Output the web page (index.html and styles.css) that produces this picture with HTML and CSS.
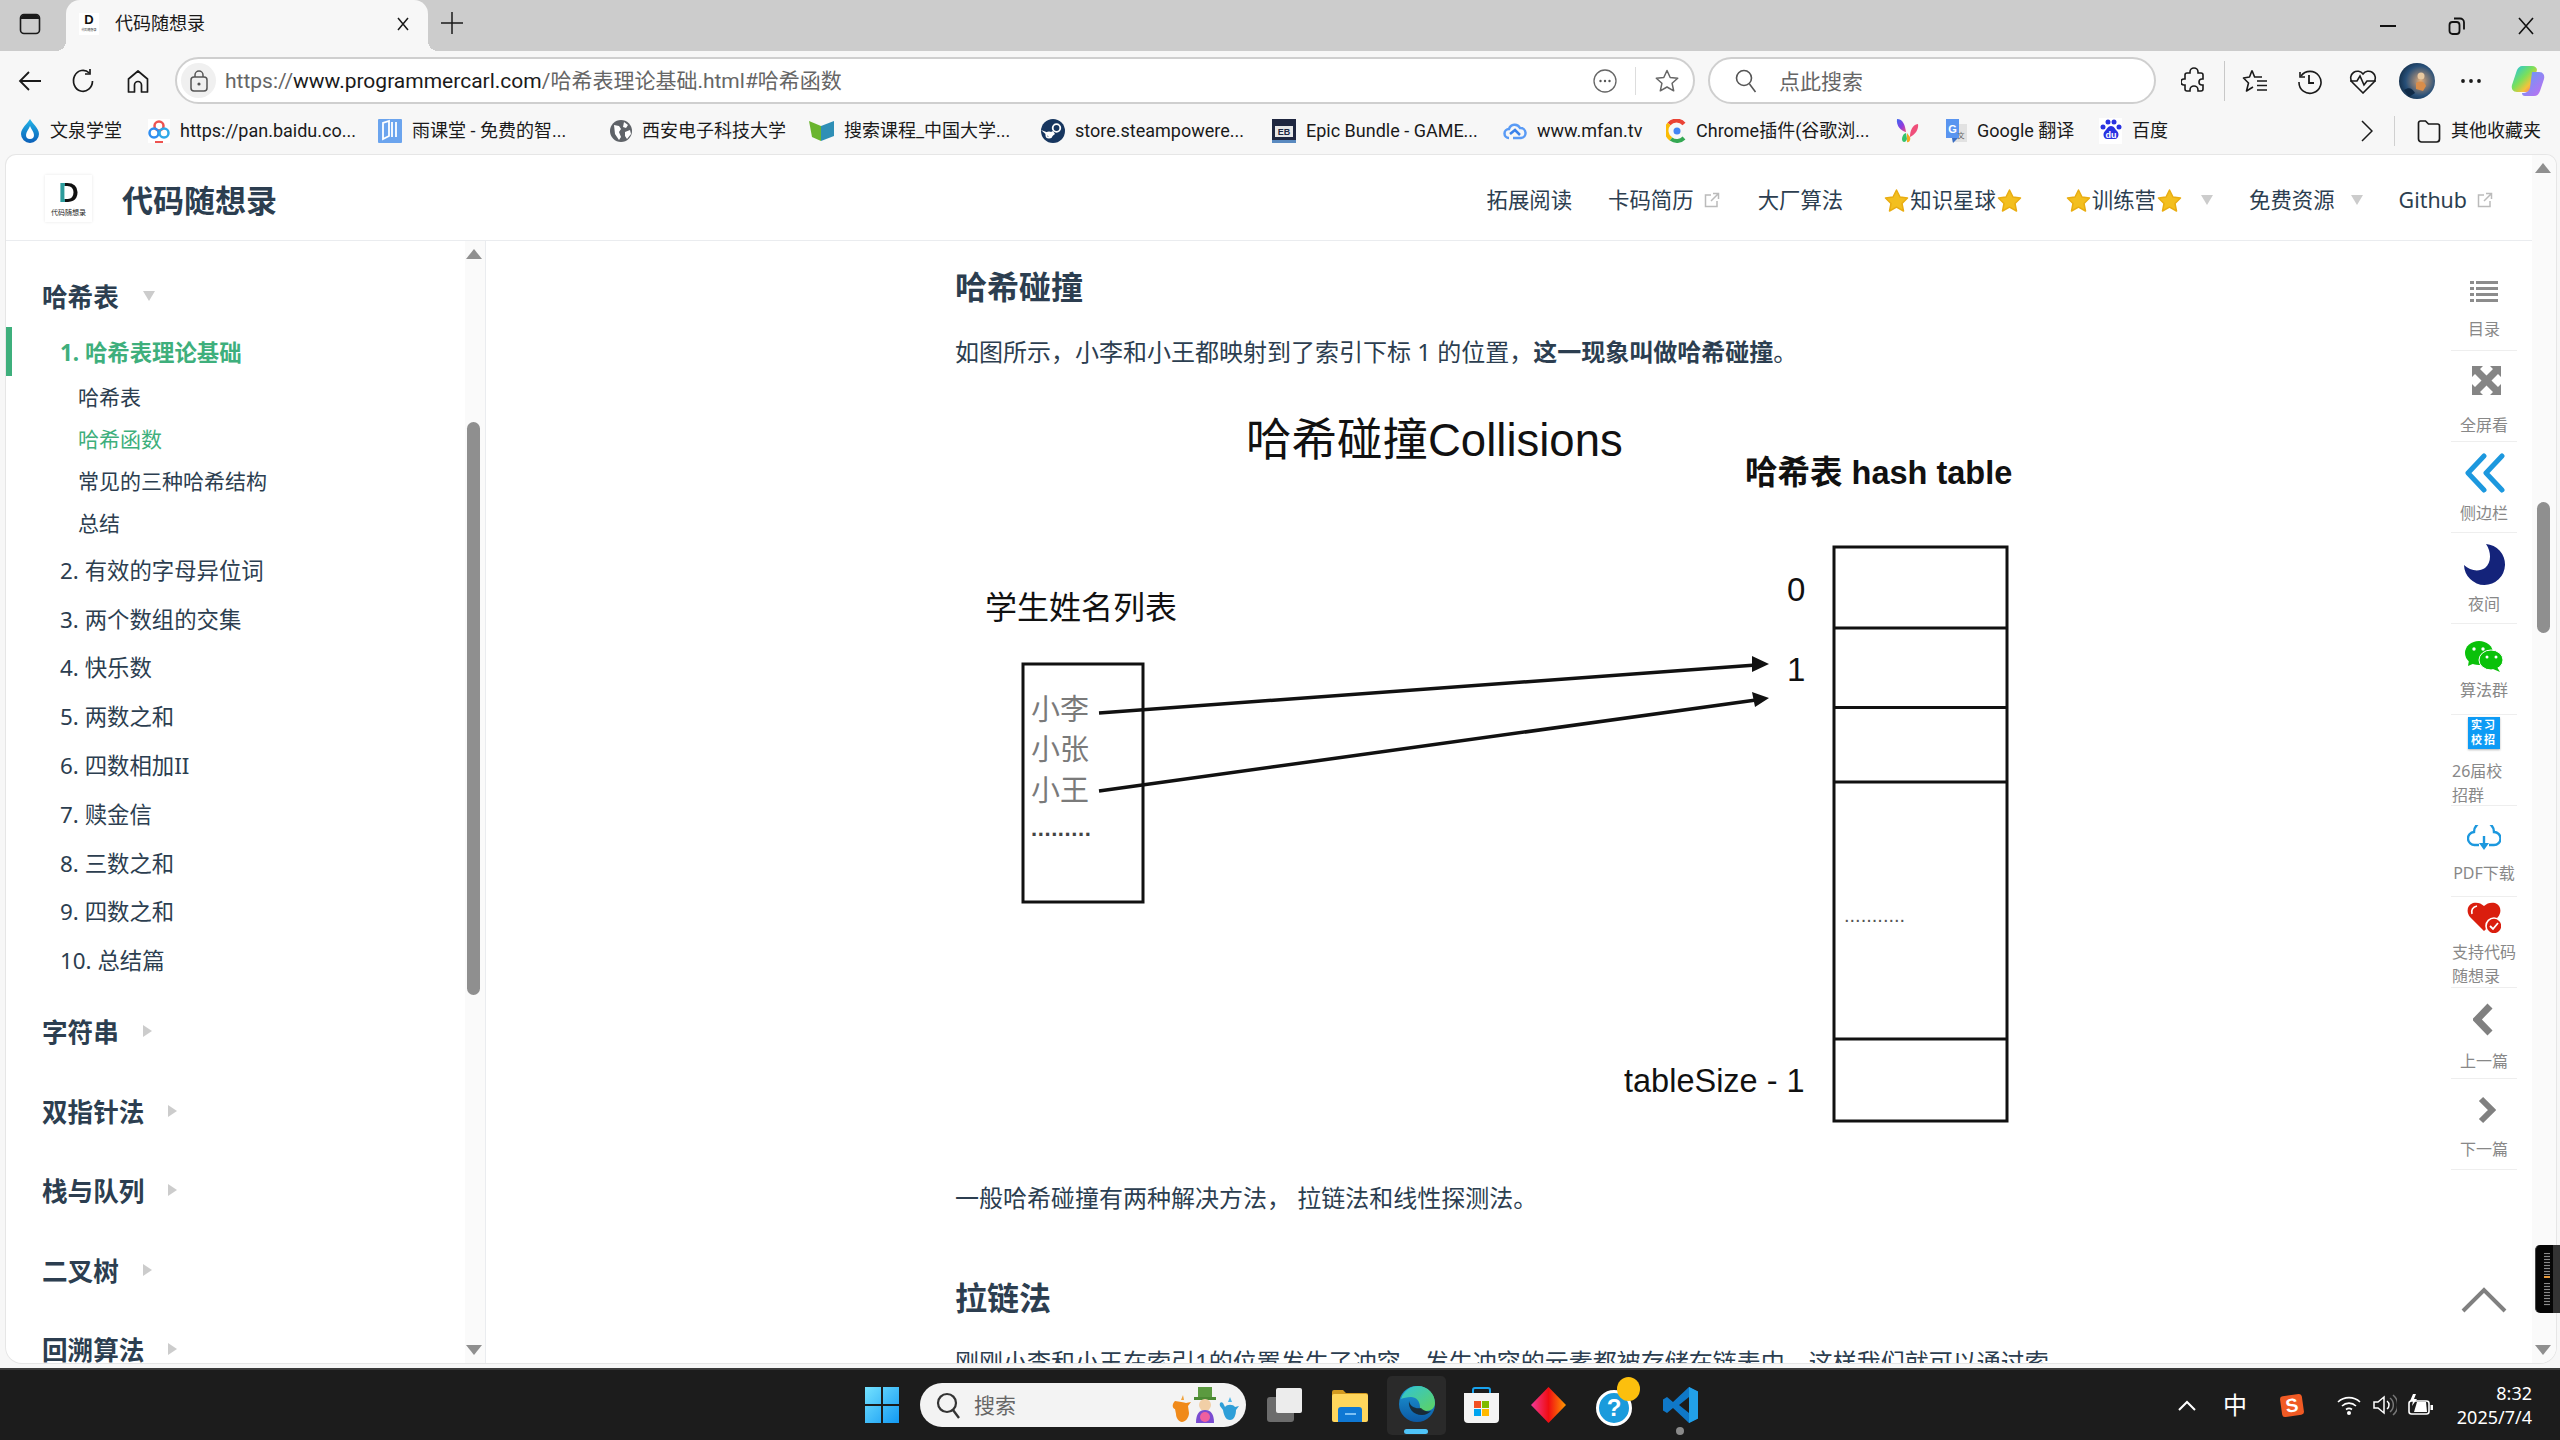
FILE: index.html
```html
<!DOCTYPE html>
<html lang="zh-CN">
<head>
<meta charset="utf-8">
<title>代码随想录</title>
<link rel="stylesheet" href="styles.css">
</head>
<body>
<svg class="defs" width="0" height="0" aria-hidden="true">
  <defs>
    <linearGradient id="gWin" x1="0" y1="0" x2="1" y2="1"><stop offset="0" stop-color="#74e2ff"/><stop offset="1" stop-color="#1299f3"/></linearGradient>
    <linearGradient id="gEdge" x1="0" y1="0" x2="0" y2="1"><stop offset="0" stop-color="#1d9ad6"/><stop offset="1" stop-color="#0c59a4"/></linearGradient>
    <linearGradient id="gEdge2" x1="0" y1="0" x2="1" y2="1"><stop offset="0" stop-color="#30c3d8"/><stop offset="1" stop-color="#5fd35f"/></linearGradient>
    <linearGradient id="gDia" x1="0" y1="0" x2="1" y2="0"><stop offset="0" stop-color="#f03a9a"/><stop offset=".5" stop-color="#f00d12"/><stop offset="1" stop-color="#ff9a00"/></linearGradient>
    <linearGradient id="gCop" x1="0" y1="0" x2="1" y2="1"><stop offset="0" stop-color="#19c2f0"/><stop offset=".45" stop-color="#7be05a"/><stop offset=".7" stop-color="#f6c33a"/><stop offset="1" stop-color="#ef4f8f"/></linearGradient>
    <linearGradient id="gCop2" x1="0" y1="0" x2="1" y2="1"><stop offset="0" stop-color="#5aa0f8"/><stop offset="1" stop-color="#c66cf0"/></linearGradient>
    <linearGradient id="gDrop" x1="0" y1="0" x2="0" y2="1"><stop offset="0" stop-color="#23b5e8"/><stop offset="1" stop-color="#0b5fb8"/></linearGradient>
    <linearGradient id="gFly" x1="0" y1="0" x2="1" y2="1"><stop offset="0" stop-color="#3a6cf0"/><stop offset=".55" stop-color="#8d3be0"/><stop offset="1" stop-color="#ef4f7a"/></linearGradient>
    <radialGradient id="gAva" cx=".6" cy=".5" r=".6"><stop offset="0" stop-color="#e8b078"/><stop offset=".3" stop-color="#8a7f78"/><stop offset=".7" stop-color="#274f78"/><stop offset="1" stop-color="#16324e"/></radialGradient>
  </defs>
</svg>

<header class="tabbar">
  <svg class="tb-panel" width="22" height="22" viewBox="0 0 22 22"><rect x="1.5" y="1.5" width="19" height="19" rx="3.5" fill="none" stroke="#1a1a1a" stroke-width="1.6"/><path d="M2 6V4.5A2.5 2.5 0 0 1 4.5 2h13A2.5 2.5 0 0 1 20 4.5V6z" fill="#1a1a1a"/></svg>
  <div class="tab">
    <span class="tab-fav"><span class="d-mini">D</span><span class="logo-mini">代码随想录</span></span>
    <span class="tab-title">代码随想录</span>
    <svg class="tab-close" width="14" height="14" viewBox="0 0 14 14"><path d="M2 1l10 12M12 1L2 13" stroke="#1a1a1a" stroke-width="1.5" fill="none"/></svg>
  </div>
  <svg class="tab-plus" width="22" height="24" viewBox="0 0 22 24"><path d="M11 1v22M0 12h22" stroke="#1a1a1a" stroke-width="1.5"/></svg>
  <div class="winctl">
    <span class="winbtn"><svg width="18" height="4" viewBox="0 0 18 4"><path d="M1 2h16" stroke="#111" stroke-width="2"/></svg></span>
    <span class="winbtn"><svg width="18" height="20" viewBox="0 0 18 20"><rect x="1.5" y="6" width="10" height="12" rx="3" fill="none" stroke="#111" stroke-width="1.8"/><path d="M6 2.5h6a4 4 0 0 1 4 4v7" fill="none" stroke="#111" stroke-width="1.8"/></svg></span>
    <span class="winbtn"><svg width="18" height="18" viewBox="0 0 18 18"><path d="M2 1l14 16M16 1L2 17" stroke="#111" stroke-width="1.6"/></svg></span>
  </div>
</header>

<div class="toolbar">
  <span class="tool"><svg width="26" height="26" viewBox="0 0 26 26"><path d="M24 13H3M12 4l-9 9 9 9" fill="none" stroke="#1a1a1a" stroke-width="1.8"/></svg></span>
  <span class="tool"><svg width="26" height="26" viewBox="0 0 26 26"><path d="M21.5 13a9.5 10.5 0 1 1-3.2-8" fill="none" stroke="#1a1a1a" stroke-width="1.7"/><path d="M19 1v5h-5" fill="none" stroke="#1a1a1a" stroke-width="1.7"/></svg></span>
  <span class="tool"><svg width="26" height="26" viewBox="0 0 26 26"><path d="M3.5 24V11L13 3l9.500 8v13h-6v-7a3.500 3.500 0 0 0-7 0v7z" fill="none" stroke="#1a1a1a" stroke-width="1.7" stroke-linejoin="round"/></svg></span>
  <div class="address">
    <span class="lock"><svg width="20" height="24" viewBox="0 0 20 24"><rect x="2" y="8" width="16" height="14" rx="3" fill="none" stroke="#555" stroke-width="1.500"/><path d="M6 8V6a4 4 0 0 1 8 0v2" fill="none" stroke="#555" stroke-width="1.500"/><circle cx="10" cy="15" r="1.600" fill="#555"/></svg></span>
    <span class="url"><span class="dim">https://</span>www.programmercarl.com<span class="dim">/哈希表理论基础.html#哈希函数</span></span>
    <span class="addr-end">
      <svg width="24" height="24" viewBox="0 0 24 24"><circle cx="12" cy="12" r="11" fill="none" stroke="#666" stroke-width="1.300"/><circle cx="7.500" cy="12" r="1.200" fill="#555"/><circle cx="12" cy="12" r="1.200" fill="#555"/><circle cx="16.500" cy="12" r="1.200" fill="#555"/></svg>
      <i class="addr-sep"></i>
      <svg width="26" height="26" viewBox="0 0 26 26"><path d="M13 2.500l3.200 7 7.500.8-5.600 5 1.600 7.500-6.700-3.800-6.700 3.800 1.600-7.500-5.600-5 7.500-.8z" fill="none" stroke="#666" stroke-width="1.500" stroke-linejoin="round"/></svg>
    </span>
  </div>
  <div class="search">
    <svg width="24" height="26" viewBox="0 0 24 26"><circle cx="10" cy="10" r="7.500" fill="none" stroke="#555" stroke-width="1.600"/><path d="M15.500 16l6 8" stroke="#555" stroke-width="1.600"/></svg>
    <span class="search-text">点此搜索</span>
  </div>
  <span class="tool"><svg width="26" height="28" viewBox="0 0 26 28"><path d="M9 5a4 4 0 0 1 8 0v1h3a2 2 0 0 1 2 2v4h-1a3 3 0 0 0 0 6h1v4a2 2 0 0 1-2 2h-3v-1a4 4 0 0 0-8 0v1H6a2 2 0 0 1-2-2v-4H3a3 3 0 0 1 0-6h1V8a2 2 0 0 1 2-2h3z" fill="none" stroke="#1a1a1a" stroke-width="1.600"/></svg></span>
  <i class="tool-sep"></i>
  <span class="tool"><svg width="26" height="26" viewBox="0 0 26 26"><path d="M10 2.500l2.600 6.500H20M10 2.500L7.500 9 1.500 10l5 5-2 8 6.500-4" fill="none" stroke="#1a1a1a" stroke-width="1.600" stroke-linejoin="round"/><path d="M15 13h10M15 17.500h10M15 22h10" stroke="#1a1a1a" stroke-width="1.600"/></svg></span>
  <span class="tool"><svg width="26" height="28" viewBox="0 0 26 28"><path d="M4 5v5h5" fill="none" stroke="#1a1a1a" stroke-width="1.600"/><path d="M5 9a11 11 0 1 1-2 6" fill="none" stroke="#1a1a1a" stroke-width="1.600"/><path d="M13 8v8h5" fill="none" stroke="#1a1a1a" stroke-width="1.800"/></svg></span>
  <span class="tool"><svg width="28" height="26" viewBox="0 0 28 26"><path d="M14 25L3 14a6.500 6.500 0 0 1 11-8 6.500 6.500 0 0 1 11 8z" fill="none" stroke="#1a1a1a" stroke-width="1.600"/><path d="M1 13h7l3-5 4 9 3-4h9" fill="none" stroke="#1a1a1a" stroke-width="1.600"/></svg></span>
  <span class="tool"><svg width="36" height="36" viewBox="0 0 36 36"><circle cx="18" cy="18" r="18" fill="url(#gAva)"/><circle cx="22" cy="13" r="3.500" fill="#e9c9a0"/><path d="M17 20c5-3 9-1 10 3l-3 5-7-2z" fill="#d98d4a"/><path d="M5 27c5-3 8-2 11 3l-6 4z" fill="#0f2a47"/></svg></span>
  <span class="tool"><svg width="22" height="6" viewBox="0 0 22 6"><circle cx="3" cy="3" r="1.900" fill="#1a1a1a"/><circle cx="11" cy="3" r="1.900" fill="#1a1a1a"/><circle cx="19" cy="3" r="1.900" fill="#1a1a1a"/></svg></span>
  <span class="tool tool-cop"><svg width="34" height="32" viewBox="0 0 34 32"><path d="M11 1h10c3 0 5 2 5 4L21 22c-1 3-3 5-6 5H6c-4 0-6-3-5-7L6 5c1-2 3-4 5-4z" fill="url(#gCop)"/><path d="M21 7h7c4 0 6 3 5 7l-4 12c-1 3-3 5-6 5h-9c-2 0-3-1-3-3 5 0 7-2 8-5z" fill="url(#gCop2)"/></svg></span>
</div>

<nav class="bookmarks">
  <div class="bm"><svg class="bm-ico" width="20" height="24" viewBox="0 0 20 24"><path d="M10 0c2 4 9 9 9 15a9 9 0 0 1-18 0C1 9 8 4 10 0z" fill="url(#gDrop)"/><path d="M10 7c1 3 4 6 4 9a4 4 0 0 1-8 0c0-3 3-6 4-9z" fill="#fff"/></svg><span>文泉学堂</span></div>
  <div class="bm"><svg class="bm-ico" width="22" height="24" viewBox="0 0 22 24"><rect width="22" height="24" fill="#fff"/><circle cx="11" cy="7" r="4.500" fill="none" stroke="#ee5350" stroke-width="2.500"/><circle cx="6" cy="14" r="4.500" fill="none" stroke="#2f8df0" stroke-width="2.500"/><circle cx="16" cy="14" r="4.500" fill="none" stroke="#30a8e8" stroke-width="2.500"/><rect x="7" y="22" width="8" height="2" fill="#ee5350"/></svg><span>https://pan.baidu.co...</span></div>
  <div class="bm"><svg class="bm-ico" width="24" height="24" viewBox="0 0 24 24"><rect width="24" height="24" rx="1" fill="#6ba4ee"/><path d="M5 4v16l6-3V2zM14 3v15M18 3v15" fill="none" stroke="#fff" stroke-width="1.800"/></svg><span>雨课堂 - 免费的智...</span></div>
  <div class="bm"><svg class="bm-ico" width="22" height="22" viewBox="0 0 22 22"><circle cx="11" cy="11" r="11" fill="#5f6368"/><path d="M4 5l5 1 2 3-2 3 2 5-2 3-4-6zM14 2l4 3-2 3-3-1zM15 12l5-2 1 4-4 5-2-3z" fill="#fff"/></svg><span>西安电子科技大学</span></div>
  <div class="bm"><svg class="bm-ico" width="25" height="24" viewBox="0 0 25 24"><path d="M0 2l12 5v15L3 18z" fill="#6ab52f"/><path d="M12 7l13-5v15l-13 5z" fill="#2f8fb6"/></svg><span>搜索课程_中国大学...</span></div>
  <div class="bm"><svg class="bm-ico" width="24" height="24" viewBox="0 0 24 24"><circle cx="12" cy="12" r="12" fill="#17365f"/><circle cx="15.500" cy="9" r="3.800" fill="none" stroke="#fff" stroke-width="1.800"/><circle cx="8" cy="16" r="2.800" fill="none" stroke="#fff" stroke-width="1.500"/><path d="M0 11l8 3 4-2 2 3-5 4z" fill="#fff"/></svg><span>store.steampowere...</span></div>
  <div class="bm"><svg class="bm-ico" width="24" height="24" viewBox="0 0 24 24"><rect width="24" height="24" fill="#1f2740"/><rect y="21" width="24" height="3" fill="#5a8ac0"/><rect x="3" y="7" width="18" height="11" fill="#e8e8e8"/><text x="12" y="16" class="epic-txt">EB</text></svg><span>Epic Bundle - GAME...</span></div>
  <div class="bm"><svg class="bm-ico" width="24" height="18" viewBox="0 0 24 18"><path d="M6 16a4.500 4.500 0 0 1 0-9 6 6 0 0 1 11-1 5 5 0 0 1 1 10H10" fill="none" stroke="#5a9bf5" stroke-width="2.500"/><path d="M7 12l5-4 5 5" fill="none" stroke="#3a82ea" stroke-width="2.500"/></svg><span>www.mfan.tv</span></div>
  <div class="bm"><svg class="bm-ico" width="20" height="24" viewBox="0 0 20 24"><path d="M18 5A10 10 0 0 0 3 5" fill="none" stroke="#ea4335" stroke-width="4"/><path d="M3 5a10 10 0 0 0 2 15" fill="none" stroke="#fbbc05" stroke-width="4"/><path d="M5 20a10 10 0 0 0 13-1" fill="none" stroke="#34a853" stroke-width="4"/><circle cx="11" cy="12" r="3.500" fill="#4285f4"/></svg><span>Chrome插件(谷歌浏...</span></div>
  <div class="bm"><svg class="bm-ico" width="25" height="24" viewBox="0 0 25 24"><path d="M2 0c6 0 8 6 9 13-5-1-10-6-9-13z" fill="url(#gFly)"/><path d="M23 5c1 5-3 11-8 13 0-6 2-12 8-13z" fill="#ef4f7a"/><path d="M9 15l2-1 1 6c-1 4-5 4-5 0 0-2 1-4 2-5z" fill="#35c46b"/><path d="M12 14l3 4c1 3-1 6-3 5z" fill="#f5a623"/></svg></div>
  <div class="bm"><svg class="bm-ico" width="23" height="26" viewBox="0 0 23 26"><rect x="8" y="6" width="15" height="18" fill="#e2e2e2"/><path d="M2 1h13v19H2z" fill="#5a95f0"/><path d="M8 20h6l-5 5z" fill="#3a6fc4"/><text x="8.500" y="15" class="gt-g">G</text><text x="17" y="20" class="gt-x">文</text></svg><span>Google 翻译</span></div>
  <div class="bm"><svg class="bm-ico" width="23" height="26" viewBox="0 0 23 26"><rect width="23" height="26" fill="#fff"/><g fill="#2932e1"><circle cx="4" cy="9" r="2.500"/><circle cx="9" cy="4" r="2.500"/><circle cx="15" cy="4" r="2.500"/><circle cx="20" cy="9" r="2.500"/><path d="M12 8c3 0 4 3 6 5 3 3 1 8-2 8H8c-3 0-5-5-2-8 2-2 3-5 6-5z"/></g><text x="12" y="20" class="bd-du">du</text></svg><span>百度</span></div>
  <div class="bm-more"><svg width="12" height="22" viewBox="0 0 12 22"><path d="M1 1l10 10L1 21" fill="none" stroke="#1a1a1a" stroke-width="1.500"/></svg></div>
  <i class="bm-sep"></i>
  <div class="bm bm-other"><svg class="bm-ico" width="24" height="24" viewBox="0 0 24 24"><path d="M1.500 4a2 2 0 0 1 2-2h5l3 3h9a2 2 0 0 1 2 2v13a3 3 0 0 1-3 3h-15a3 3 0 0 1-3-3z" fill="none" stroke="#1a1a1a" stroke-width="1.700"/></svg><span>其他收藏夹</span></div>
</nav>

<main class="page">
  <div class="site-header">
    <div class="logo"><span class="logo-d">D</span><span class="logo-t">代码随想录</span></div>
    <div class="site-title">代码随想录</div>
    <div class="site-nav">
      <a class="nav-item">拓展阅读</a>
      <a class="nav-item">卡码简历<svg class="ext" width="16" height="16" viewBox="0 0 16 16"><path d="M7 3H1.500v11.500H13V9M9 1.500h5.500V7M14 2L7 9" fill="none" stroke="#bbb" stroke-width="1.500"/></svg></a>
      <a class="nav-item nav-c">大厂算法</a>
      <a class="nav-item nav-d"><svg class="star" width="26" height="24" viewBox="0 0 26 24"><path d="M13 2l3.500 7 7.500 1-5.500 5.500 1.500 7.500-7-3.800L6 23l1.500-7.500L2 10l7.500-1z" fill="#f3bf1f" stroke="#e9ad12" stroke-linejoin="round" stroke-width="1.500"/></svg>知识星球<svg class="star" width="26" height="24" viewBox="0 0 26 24"><path d="M13 2l3.500 7 7.500 1-5.500 5.500 1.500 7.500-7-3.800L6 23l1.500-7.500L2 10l7.500-1z" fill="#f3bf1f" stroke="#e9ad12" stroke-linejoin="round" stroke-width="1.500"/></svg></a>
      <a class="nav-item nav-e"><svg class="star" width="26" height="24" viewBox="0 0 26 24"><path d="M13 2l3.500 7 7.500 1-5.500 5.500 1.500 7.500-7-3.800L6 23l1.500-7.500L2 10l7.500-1z" fill="#f3bf1f" stroke="#e9ad12" stroke-linejoin="round" stroke-width="1.500"/></svg>训练营<svg class="star" width="26" height="24" viewBox="0 0 26 24"><path d="M13 2l3.500 7 7.500 1-5.500 5.500 1.500 7.500-7-3.800L6 23l1.500-7.500L2 10l7.500-1z" fill="#f3bf1f" stroke="#e9ad12" stroke-linejoin="round" stroke-width="1.500"/></svg><i class="caret-d nav-caret"></i></a>
      <a class="nav-item">免费资源<i class="caret-d nav-caret nav-caret-wide"></i></a>
      <a class="nav-item nav-github">Github<svg class="ext" width="16" height="16" viewBox="0 0 16 16"><path d="M7 3H1.500v11.500H13V9M9 1.500h5.500V7M14 2L7 9" fill="none" stroke="#bbb" stroke-width="1.500"/></svg></a>
    </div>
  </div>

  <div class="page-body">
    <aside class="sidebar">
      <div class="side-head side-first">哈希表<i class="caret-d side-caret"></i></div>
      <a class="side-link active">1. 哈希表理论基础</a>
      <a class="side-sub">哈希表</a>
      <a class="side-sub current">哈希函数</a>
      <a class="side-sub">常见的三种哈希结构</a>
      <a class="side-sub">总结</a>
      <a class="side-link">2. 有效的字母异位词</a>
      <a class="side-link">3. 两个数组的交集</a>
      <a class="side-link">4. 快乐数</a>
      <a class="side-link">5. 两数之和</a>
      <a class="side-link">6. 四数相加II</a>
      <a class="side-link">7. 赎金信</a>
      <a class="side-link">8. 三数之和</a>
      <a class="side-link">9. 四数之和</a>
      <a class="side-link">10. 总结篇</a>
      <div class="side-head side-gap1">字符串<i class="caret-r side-caret"></i></div>
      <div class="side-head">双指针法<i class="caret-r side-caret"></i></div>
      <div class="side-head">栈与队列<i class="caret-r side-caret"></i></div>
      <div class="side-head">二叉树<i class="caret-r side-caret"></i></div>
      <div class="side-head">回溯算法<i class="caret-r side-caret"></i></div>
      <div class="side-scroll">
        <i class="arrow-up"></i>
        <i class="side-thumb"></i>
        <i class="arrow-down"></i>
      </div>
    </aside>

    <article class="content">
      <h3 class="h-a">哈希碰撞</h3>
      <p class="p-a">如图所示，小李和小王都映射到了索引下标 1 的位置，<strong>这一现象叫做哈希碰撞</strong>。</p>
      <svg class="diagram" width="1090" height="779" viewBox="955 400 1090 779">
        <text x="1246" y="440" class="d-title">哈希碰撞Collisions</text>
        <text x="1745" y="473" class="d-head">哈希表 hash table</text>
        <text x="985" y="608" class="d-sub">学生姓名列表</text>
        <rect x="1023" y="664" width="120" height="238" class="d-box"/>
        <text x="1031" y="709.500" class="d-name">小李</text>
        <text x="1031" y="749.500" class="d-name">小张</text>
        <text x="1031" y="791" class="d-name">小王</text>
        <text x="1031" y="828" class="d-dots">.........</text>
        <rect x="1834" y="547" width="173" height="574" class="d-box"/>
        <path d="M1834 628H2007M1834 707.500H2007M1834 782H2007M1834 1039H2007" class="d-line"/>
        <text x="1787" y="589" class="d-idx">0</text>
        <text x="1787" y="669" class="d-idx">1</text>
        <text x="1624" y="1081" class="d-label">tableSize - 1</text>
        <text x="1844" y="915" class="d-dots2">...........</text>
        <path d="M1099 713L1756 665" class="d-arrow"/>
        <path d="M1099 791L1756 700" class="d-arrow"/>
        <path d="M1769 664L1752 656V672zM1769 698L1752 692L1755 707z" class="d-head-arrow"/>
      </svg>
      <p class="p-b">一般哈希碰撞有两种解决方法， 拉链法和线性探测法。</p>
      <h3 class="h-b">拉链法</h3>
      <p class="p-c">刚刚小李和小王在索引1的位置发生了冲突，发生冲突的元素都被存储在链表中，这样我们就可以通过索</p>
    </article>

    <div class="rail">
      <div class="rail-item r1"><svg class="rail-ico" width="28" height="22" viewBox="0 0 28 22"><path d="M0 1h4v3H0zM6 1h22v3H6zM0 7h4v3H0zM6 7h22v3H6zM0 13h4v3H0zM6 13h22v3H6zM0 19h4v3H0zM6 19h22v3H6z" fill="#8c8c8c"/></svg><span class="rail-label">目录</span></div>
      <div class="rail-item r2"><svg class="rail-ico" width="29" height="29" viewBox="0 0 29 29"><path d="M0 0h11L8 3l6.500 6.500L21 3l-3-3h11v11l-3-3-6.500 6.500L26 21l3-3v11H18l3-3-6.500-6.500L8 26l3 3H0V18l3 3 6.500-6.500L3 8l-3 3z" fill="#858585"/></svg><span class="rail-label">全屏看</span></div>
      <div class="rail-item r3"><svg class="rail-ico" width="40" height="40" viewBox="0 0 40 40"><path d="M19 3L3 20l16 17M37 3L21 20l16 17" fill="none" stroke="#1c98de" stroke-width="5" stroke-linecap="round" stroke-linejoin="round"/></svg><span class="rail-label">侧边栏</span></div>
      <div class="rail-item r4"><svg class="rail-ico" width="41" height="41" viewBox="0 0 41 41"><path d="M22 0A20.500 20.500 0 1 1 0 21c6 6 15 7 21 3 6-5 7-15 1-24z" fill="#14237a"/></svg><span class="rail-label">夜间</span></div>
      <div class="rail-item r5"><svg class="rail-ico" width="38" height="31" viewBox="0 0 38 31"><ellipse cx="14" cy="12" rx="14" ry="12" fill="#0ac10a"/><path d="M4 19l-1 6 7-3z" fill="#0ac10a"/><ellipse cx="26" cy="19" rx="12" ry="10" fill="#0ac10a" stroke="#fff" stroke-width="1"/><path d="M32 26l3 5-7-3z" fill="#0ac10a"/><circle cx="9" cy="8" r="1.700" fill="#fff"/><circle cx="18" cy="8" r="1.700" fill="#fff"/><circle cx="22" cy="16" r="1.500" fill="#fff"/><circle cx="31" cy="16" r="1.500" fill="#fff"/></svg><span class="rail-label">算法群</span></div>
      <div class="rail-item r6"><div class="rail-ico qr"><span>实习</span><span>校招</span></div><span class="rail-label rail-left">26届校招群</span></div>
      <div class="rail-item r7"><svg class="rail-ico" width="34" height="26" viewBox="0 0 34 26"><path d="M12 20H8a6.500 6.500 0 0 1-1-13 10 10 0 0 1 20 0 6.500 6.500 0 0 1 0 13h-5" fill="none" stroke="#1c98de" stroke-width="2.400"/><path d="M17 11v9" stroke="#1c98de" stroke-width="2.400"/><path d="M12 18h10l-5 7z" fill="#1c98de"/></svg><span class="rail-label">PDF下载</span></div>
      <div class="rail-item r8"><svg class="rail-ico" width="34" height="32" viewBox="0 0 34 32"><path d="M17 30L3 16C-1 11 0 4 6 2c4-1 8 0 11 3 3-3 7-4 11-3 6 2 7 9 3 14z" fill="#da1e0e"/><path d="M5 13C4 9 6 6 10 5" fill="none" stroke="#fff" stroke-width="1.600"/><circle cx="27" cy="25" r="8" fill="#da1e0e" stroke="#fff" stroke-width="1.600"/><path d="M23 25l3 3 5-6" fill="none" stroke="#fff" stroke-width="1.800"/></svg><span class="rail-label rail-left">支持代码随想录</span></div>
      <div class="rail-item r9"><svg class="rail-ico" width="21" height="33" viewBox="0 0 21 33"><path d="M17 3L4 16.500 17 30" fill="none" stroke="#808080" stroke-width="7"/></svg><span class="rail-label">上一篇</span></div>
      <div class="rail-item r10"><svg class="rail-ico" width="18" height="28" viewBox="0 0 18 28"><path d="M3 3l11 11L3 25" fill="none" stroke="#808080" stroke-width="6"/></svg><span class="rail-label">下一篇</span></div>
      <svg class="rail-top" width="46" height="26" viewBox="0 0 46 26"><path d="M2 24L23 3l21 21" fill="none" stroke="#808080" stroke-width="4"/></svg>
    </div>

    <div class="page-scroll">
      <i class="arrow-up"></i>
      <i class="page-thumb"></i>
      <i class="arrow-down"></i>
    </div>
  </div>
</main>

<div class="widget"><i class="ticks"></i><i class="tick-on"></i><i class="ticks ticks-b"></i></div>

<footer class="taskbar">
  <svg class="tk tk-start" width="34" height="36" viewBox="0 0 34 36"><path d="M0 0h16v17H0zM18 0h16v17H18zM0 19h16v17H0zM18 19h16v17H18z" fill="url(#gWin)"/></svg>
  <div class="tk tk-search">
    <svg width="26" height="28" viewBox="0 0 26 28"><circle cx="12" cy="12" r="9" fill="none" stroke="#333" stroke-width="2.200"/><path d="M18 19l6 8" stroke="#333" stroke-width="2.400"/></svg>
    <span class="tk-search-text">搜索</span>
    <svg class="tk-art" width="68" height="36" viewBox="0 0 68 36"><path d="M3 14c-4 4-2 8 0 8l1 5c0 4 3 8 6 8s7-4 7-9l-1-7 3-4-5 1c-2-1-7-1-11-2z" fill="#f08a1a"/><path d="M9 13h3l-1-5z" fill="#f0a23a"/><rect x="26" y="0" width="14" height="11" fill="#5b9a3f"/><rect x="22" y="10" width="22" height="3" fill="#4c8a33"/><circle cx="33" cy="18" r="6" fill="#f1cfa6"/><path d="M24 36c0-9 3-13 9-13s9 4 9 13z" fill="#7a4bd0"/><circle cx="33" cy="30" r="5" fill="#ef5f9f"/><path d="M51 16c-2-2-4 0-3 3l3 4c1 6 3 10 7 10s6-5 6-10l3-4-4 1c-2-3-8-3-10 0z" fill="#2f9fd8"/><path d="M56 15h4l-2-5z" fill="#4fb5e8"/></svg>
  </div>
  <svg class="tk tk-view" width="35" height="34" viewBox="0 0 35 34"><rect x="0" y="9" width="27" height="25" rx="3" fill="#6c6c6c"/><rect x="9" y="0" width="26" height="25" rx="2" fill="#ececec"/></svg>
  <svg class="tk tk-exp" width="36" height="33" viewBox="0 0 36 33"><path d="M0 3a2 2 0 0 1 2-2h9l3 3h20a2 2 0 0 1 2 2v3H0z" fill="#d39a1f"/><rect y="5" width="36" height="28" rx="2" fill="#ffd65c"/><path d="M6 33V21a3 3 0 0 1 3-3h18a3 3 0 0 1 3 3v12z" fill="#0f78d4"/><rect x="13" y="24" width="11" height="2" fill="#7cc0f5"/></svg>
  <div class="tk tk-active"><svg width="36" height="36" viewBox="0 0 36 36"><circle cx="18" cy="18" r="18" fill="url(#gEdge)"/><path d="M2 13C5 4 12 0 19 0c10 0 17 8 17 17 0 5-4 8-9 8-4 0-6-2-6-4 0-6-4-10-9-10-4 0-8 1-10 2z" fill="url(#gEdge2)"/><path d="M22 22c-5 1-11-1-12-7-1 7 4 14 13 14 4 0 7-2 9-4-3 1-7 0-10-3z" fill="#1a1a1a" opacity=".8"/></svg><i class="tk-ind"></i></div>
  <svg class="tk tk-store" width="35" height="36" viewBox="0 0 35 36"><path d="M9 7V3a2 2 0 0 1 2-2h13a2 2 0 0 1 2 2v4" fill="none" stroke="#18a3ef" stroke-width="2"/><path d="M0 6h35v26a4 4 0 0 1-4 4H4a4 4 0 0 1-4-4z" fill="#f4f4f4"/><rect x="10" y="14" width="7" height="7" fill="#f25022"/><rect x="18" y="14" width="7" height="7" fill="#7fba00"/><rect x="10" y="22" width="7" height="7" fill="#00a4ef"/><rect x="18" y="22" width="7" height="7" fill="#ffb900"/></svg>
  <svg class="tk tk-dia" width="35" height="36" viewBox="0 0 35 36"><path d="M17.500 0L35 18 17.500 36 0 18z" fill="url(#gDia)"/></svg>
  <div class="tk tk-help"><span class="help-c">?</span><i class="help-b"></i></div>
  <div class="tk tk-vs"><svg width="35" height="36" viewBox="0 0 35 36"><path d="M26 0l9 4.500v27L26 36 10 21l-6 5-4-2.500v-11L4 10l6 5zM26 10l-10 8 10 8z" fill="#0f78c8" fill-rule="evenodd"/><path d="M26 0l9 4.500v27L26 36z" fill="#22a0e8"/></svg><i class="tk-dot"></i></div>
  <div class="tray">
    <span class="tray-i"><svg width="18" height="12" viewBox="0 0 18 12"><path d="M1 11l8-8 8 8" fill="none" stroke="#fff" stroke-width="2"/></svg></span>
    <span class="tray-i tray-zh">中</span>
    <span class="tray-i"><span class="sogou">S</span></span>
    <span class="tray-i"><svg width="24" height="20" viewBox="0 0 24 20"><path d="M1 7a16 16 0 0 1 22 0M5 11a10 10 0 0 1 14 0M9 14.500a5 5 0 0 1 6 0" fill="none" stroke="#fff" stroke-width="1.600"/><circle cx="12" cy="18" r="2" fill="#fff"/></svg></span>
    <span class="tray-i"><svg width="24" height="22" viewBox="0 0 24 22"><path d="M1 8h4l6-5v16l-6-5H1z" fill="none" stroke="#fff" stroke-width="1.500"/><path d="M14 7a5 5 0 0 1 0 8" fill="none" stroke="#fff" stroke-width="1.500"/><path d="M17 4a9 9 0 0 1 0 14M20 1a13 13 0 0 1 0 20" fill="none" stroke="#777" stroke-width="1.500"/></svg></span>
    <span class="tray-i"><svg width="26" height="22" viewBox="0 0 26 22"><rect x="1" y="7" width="20" height="13" rx="2.500" fill="none" stroke="#fff" stroke-width="1.600"/><rect x="22.500" y="11" width="2.500" height="5" fill="#fff"/><path d="M6 18l3-10h9l1 10z" fill="#fff"/><path d="M5 0L2 7h3l-1 5 5-7H6l2-5z" fill="#fff"/></svg></span>
    <div class="clock"><span>8:32</span><span>2025/7/4</span></div>
  </div>
</footer>
</body>
</html>
```

FILE: styles.css
```css
* { box-sizing: border-box; }
html, body { margin: 0; padding: 0; }
body {
  width: 2560px; height: 1440px; overflow: hidden; background: #f7f7f7;
  font-family: "Noto Sans", "Noto Sans CJK SC", sans-serif; color: #2c3e50;
  display: flex; flex-direction: column; position: relative;
}
i { display: block; font-style: normal; }
.defs { position: absolute; }
svg { display: block; flex: none; }

/* title strip */
.tabbar { height: 51px; background: #cccccc; display: flex; align-items: center; position: relative; flex: none; }
.tb-panel { margin-left: 19px; margin-top: -4px; }
.tab { position: absolute; left: 66px; top: 0; width: 362px; height: 51px; background: #f7f7f7; border-radius: 14px 14px 0 0; display: flex; align-items: center; padding-left: 13px; }
.tab::before, .tab::after { content: ""; position: absolute; bottom: 0; width: 10px; height: 10px; }
.tab::before { left: -10px; background: radial-gradient(circle at 0 0, transparent 10px, #f7f7f7 10px); }
.tab::after { right: -10px; background: radial-gradient(circle at 100% 0, transparent 10px, #f7f7f7 10px); }
.tab-fav { width: 20px; height: 22px; margin-top: -4px; background: #fff; display: flex; flex-direction: column; align-items: center; overflow: hidden; }
.d-mini { font: bold 13px/14px "Liberation Sans", sans-serif; color: #111; }
.logo-mini { font-size: 3px; line-height: 6px; color: #333; white-space: nowrap; }
.tab-title { font-size: 18px; line-height: 26px; color: #1a1a1a; margin-left: 16px; margin-top: -5px; }
.tab-close { margin-left: auto; margin-right: 18px; margin-top: -4px; }
.tab-plus { position: absolute; left: 441px; top: 11px; }
.winctl { margin-left: auto; display: flex; }
.winbtn { width: 69px; display: flex; justify-content: center; align-items: center; height: 51px; }

/* toolbar */
.toolbar { height: 61px; display: flex; align-items: center; padding-left: 3px; flex: none; padding-bottom: 2px; }
.tool { width: 54px; display: flex; justify-content: center; align-items: center; flex: none; }
.tool-cop { width: 60px; }
.tool-sep { width: 1px; height: 40px; background: #c8c8c8; margin: 0 3px; }
.address { width: 1520px; height: 47px; margin-left: 10px; border: 2px solid #cfcfcf; border-radius: 24px; background: #fff; display: flex; align-items: center; padding-left: 4px; }
.lock { width: 35px; height: 35px; border-radius: 50%; background: #f0f0f0; display: flex; justify-content: center; align-items: center; }
.url { font-family: Roboto, "Noto Sans CJK SC", sans-serif; font-size: 21px; line-height: 30px; color: #1a1a1a; margin-left: 9px; white-space: nowrap; }
.dim { color: #666; }
.addr-end { margin-left: auto; display: flex; align-items: center; padding-right: 13px; }
.addr-sep { width: 1px; height: 28px; background: #ddd; margin: 0 18px 0 18px; }
.search { width: 448px; height: 47px; margin-left: 13px; margin-right: 11px; border: 2px solid #cfcfcf; border-radius: 24px; background: #fff; display: flex; align-items: center; padding-left: 24px; }
.search-text { font-size: 21px; line-height: 30px; color: #666; margin-left: 21px; }

/* bookmarks */
.bookmarks { height: 43px; flex: none; display: grid; grid-template-columns: 128px 230px 232px 199px 232px 231px 231px 163px 229px 49px 155px 262px 33px 23px 1fr; padding-left: 20px; padding-bottom: 5px; align-items: center; }
.bm { display: flex; align-items: center; gap: 10px; white-space: nowrap; font-family: Roboto, "Noto Sans CJK SC", sans-serif; font-size: 18px; line-height: 26px; color: #1a1a1a; }
.bm-more { display: flex; justify-content: flex-start; }
.bm-sep { width: 1px; height: 30px; background: #d0d0d0; }
.epic-txt { font: bold 9px "Liberation Sans", sans-serif; text-anchor: middle; fill: #1f2740; }
.gt-g { font: bold 11px "Liberation Sans", sans-serif; text-anchor: middle; fill: #fff; }
.gt-x { font: 7px "Noto Sans CJK SC", sans-serif; text-anchor: middle; fill: #666; }
.bd-du { font: bold 9px "Liberation Sans", sans-serif; text-anchor: middle; fill: #fff; }

/* page */
.page { position: relative; width: 2550px; height: 1208px; margin-left: 6px; flex: none; background: #fff; border-radius: 10px 10px 16px 16px; box-shadow: 0 0 0 1px #e6e6e6; overflow: hidden; display: flex; flex-direction: column; }
.site-header { height: 86px; flex: none; border-bottom: 1px solid #eaecef; display: flex; align-items: center; padding-left: 39px; padding-top: 4px; }
.logo { width: 47px; height: 47px; background: #fff; box-shadow: 0 0 3px rgba(0,0,0,.1); display: flex; flex-direction: column; align-items: center; margin-top: -2px; }
.logo-d { font: bold 28px/30px "Liberation Sans", sans-serif; color: #111; margin-top: 3px; background: linear-gradient(90deg, #2d9c9c 32%, #111 32%); -webkit-background-clip: text; background-clip: text; -webkit-text-fill-color: transparent; }
.logo-t { font-size: 7px; line-height: 10px; color: #222; white-space: nowrap; }
.site-title { font-size: 31px; line-height: 40px; font-weight: 700; color: #2c3e50; margin-left: 30px; }
.site-nav { margin-left: auto; display: flex; align-items: center; gap: 36px; padding-right: 63px; }
.nav-item { display: flex; align-items: center; font-size: 21.4px; line-height: 30px; color: #2c3e50; white-space: nowrap; }
.nav-c { margin-left: 2px; }
.nav-d { margin-left: 4px; }
.nav-e { margin-left: 6px; }
.ext { margin-left: 10px; }
.star { width: 27px; height: 24px; }
.caret-d { width: 0; height: 0; border-left: 6px solid transparent; border-right: 6px solid transparent; border-top: 10px solid #cccccc; }
.caret-r { width: 0; height: 0; border-top: 6px solid transparent; border-bottom: 6px solid transparent; border-left: 9px solid #cccccc; }
.nav-caret { margin-left: 18px; }
.nav-caret-wide { margin-left: 16px; }

.page-body { flex: 1; min-height: 0; display: flex; position: relative; }

/* sidebar */
.sidebar { width: 480px; flex: none; border-right: 1px solid #eaecef; position: relative; overflow: hidden; padding-top: 35px; }
.side-head { display: flex; align-items: center; height: 40px; font-size: 25.6px; font-weight: 700; padding-left: 36px; margin-bottom: 39.5px; white-space: nowrap; color: #2c3e50; }
.side-head.side-first { margin-bottom: 11px; }
.side-gap1 { margin-top: 28.5px; }
.side-caret { margin-left: 24px; }
.side-link { display: block; height: 48.8px; line-height: 48.8px; font-size: 22.4px; padding: 3px 0 0 54px; color: #2c3e50; white-space: nowrap; }
.side-link.active { color: #3eaf7c; font-weight: 700; border-left: 6px solid #3eaf7c; padding-left: 48px; padding-top: 2px; }
.side-sub { display: block; height: 42px; line-height: 42px; font-size: 21px; padding-left: 72px; color: #2c3e50; }
.side-sub.current { color: #3eaf7c; }
.side-scroll { position: absolute; right: 0; top: 0; bottom: 0; width: 20px; background: #fafafa; }
.side-scroll .arrow-up { position: absolute; left: 1px; top: 8px; }
.side-scroll .arrow-down { position: absolute; left: 1px; top: 1104px; }
.side-thumb { position: absolute; left: 2px; top: 181px; width: 13px; height: 573px; border-radius: 7px; background: #8f8f8f; }
.arrow-up { width: 0; height: 0; border-left: 8px solid transparent; border-right: 8px solid transparent; border-bottom: 10px solid #8f8f8f; }
.arrow-down { width: 0; height: 0; border-left: 8px solid transparent; border-right: 8px solid transparent; border-top: 10px solid #8f8f8f; }

/* content */
.content { width: 1100px; margin-left: 469px; flex: none; overflow: hidden; height: 100%; padding-top: 26px; }
h3 { margin: 0; font-size: 32px; line-height: 40px; font-weight: 700; color: #2c3e50; }
p { margin: 0; font-size: 24px; line-height: 38px; color: #2c3e50; }
strong { font-weight: 700; }
.p-a { margin-top: 26px; }
.diagram { margin-top: 29px; }
.h-b { margin-top: 61px; }
.p-c { margin-top: 25px; white-space: nowrap; }
.diagram text { font-family: "Liberation Sans", "Noto Sans CJK SC", sans-serif; dominant-baseline: central; fill: #111; }
.d-title { font-size: 45.5px; }
.d-head { font-size: 32.5px; font-weight: 700; }
.d-sub { font-size: 32px; }
.d-name { font-size: 29px; }
.diagram .d-name { fill: #7a7a7a; }
.d-dots { font-size: 22px; font-weight: 700; letter-spacing: .6px; }
.diagram .d-dots { fill: #444; }
.d-dots2 { font-size: 20px; }
.diagram .d-dots2 { fill: #555; }
.d-idx { font-size: 33px; }
.d-label { font-size: 32.5px; }
.d-box { fill: none; stroke: #111; stroke-width: 3; }
.d-line { fill: none; stroke: #111; stroke-width: 3; }
.d-arrow { fill: none; stroke: #111; stroke-width: 3.500; }
.d-head-arrow { fill: #111; }

/* right rail */
.rail { position: absolute; top: 19px; right: 39px; width: 66px; display: flex; flex-direction: column; }
.rail-item { height: 91px; flex: none; border-bottom: 1px solid #eeeeee; display: flex; flex-direction: column; align-items: center; position: relative; }
.rail-ico { margin-top: var(--t); margin-left: var(--x, 0); }
.rail-label { margin-top: auto; margin-bottom: var(--b); font-size: 16px; line-height: 24px; color: #888; white-space: nowrap; }
.rail-left { align-self: flex-start; white-space: normal; width: 64.5px; text-align: left; margin-left: 1px; }
.r1 { --t: 20px; --b: 9px; }
.r2 { --t: 15px; --b: 4px; --x: 4px; }
.r3 { --t: 11px; --b: 7px; --x: 1px; }
.r4 { --t: 11px; --b: 7px; }
.r5 { --t: 17px; --b: 12px; }
.r6 { --t: 2px; --b: -2px; }
.r7 { --t: 19px; --b: 11px; }
.r8 { --t: 4px; --b: -1px; }
.r9 { --t: 15px; --b: 5px; --x: -1px; }
.r10 { --t: 17px; --b: 8px; --x: 6px; }
.qr { width: 32px; height: 32px; background: #0d9bf5; box-shadow: 0 1px 2px rgba(0,0,0,.3); display: flex; flex-direction: column; align-items: center; justify-content: center; color: #fff; font-size: 11px; line-height: 15px; font-weight: 700; letter-spacing: 2px; font-family: "Liberation Serif", "Noto Sans CJK SC", serif; }
.rail-top { margin-top: 117px; align-self: center; }

/* outer scrollbar */
.page-scroll { position: absolute; right: 0; top: -86px; bottom: 0; width: 24px; background: #fafafa; }
.page-scroll .arrow-up { position: absolute; left: 3px; top: 8px; }
.page-scroll .arrow-down { position: absolute; left: 3px; top: 1190px; }
.page-thumb { position: absolute; left: 5px; top: 347px; width: 13px; height: 131px; border-radius: 7px; background: #8f8f8f; }

.widget { position: absolute; left: 2535px; top: 1245px; width: 25px; height: 68px; background: #060606; border-radius: 5px 0 0 5px; border-right: 7px solid #333; border-left: 1px solid #444; padding: 8px 0 0 8px; }
.ticks { width: 6px; height: 22px; background: repeating-linear-gradient(#8a8a8a 0 1px, #111 1px 3px); }
.tick-on { width: 6px; height: 2px; background: #e89a3c; margin: 1px 0 5px; }
.ticks-b { height: 23px; }

/* taskbar */
.taskbar { position: absolute; left: 0; top: 1368px; width: 2560px; height: 72px; background: #1c1c1c; border-top: 2px solid #3a3a3a; display: flex; align-items: center; padding-left: 865px; }
.tk { flex: none; }
.tk-search { width: 326px; height: 44px; margin-left: 21px; border-radius: 22px; background: #f3f3f3; display: flex; align-items: center; padding-left: 15px; }
.tk-search-text { font-size: 21px; line-height: 30px; color: #666; margin-left: 13px; }
.tk-art { margin-left: auto; margin-right: 6px; }
.tk-view { margin-left: 21px; }
.tk-exp { margin-left: 30px; }
.tk-active { width: 59px; height: 59px; margin-left: 19px; background: #2a2a2a; border-radius: 5px; display: flex; justify-content: center; padding-top: 10px; position: relative; }
.tk-ind { position: absolute; left: 17px; bottom: 1px; width: 24px; height: 5px; border-radius: 3px; background: #4fc3f7; }
.tk-store { margin-left: 18px; }
.tk-dia { margin-left: 32px; }
.tk-help { width: 44px; height: 44px; margin-left: 30px; position: relative; }
.help-c { position: absolute; left: 0; top: 7px; width: 36px; height: 36px; border-radius: 50%; background: #1a9bdc; border: 3px solid #fff; color: #fff; font: bold 24px/30px "Liberation Sans", sans-serif; text-align: center; }
.help-b { position: absolute; left: 21px; top: -6px; width: 23px; height: 24px; border-radius: 50%; background: #fcbf0d; }
.tk-vs { margin-left: 23px; position: relative; }
.tk-dot { position: absolute; left: 13px; top: 40px; width: 8px; height: 8px; border-radius: 50%; background: #8a8a8a; }
.tray { position: absolute; left: 2163px; top: 0; height: 70px; display: grid; grid-template-columns: 48px 48px 66px 48px 24px 48px 87px; align-items: center; color: #fff; }
.tray-i { display: flex; justify-content: center; align-items: center; }
.tray-zh { font-size: 24px; line-height: 30px; color: #fff; }
.sogou { width: 22px; height: 21px; background: #f05a24; border-radius: 3px; transform: rotate(-8deg); color: #fff; font: bold 19px/21px "Liberation Sans", sans-serif; text-align: center; }
.clock { display: flex; flex-direction: column; align-items: flex-end; font-size: 18px; line-height: 24px; color: #fff; }
```
